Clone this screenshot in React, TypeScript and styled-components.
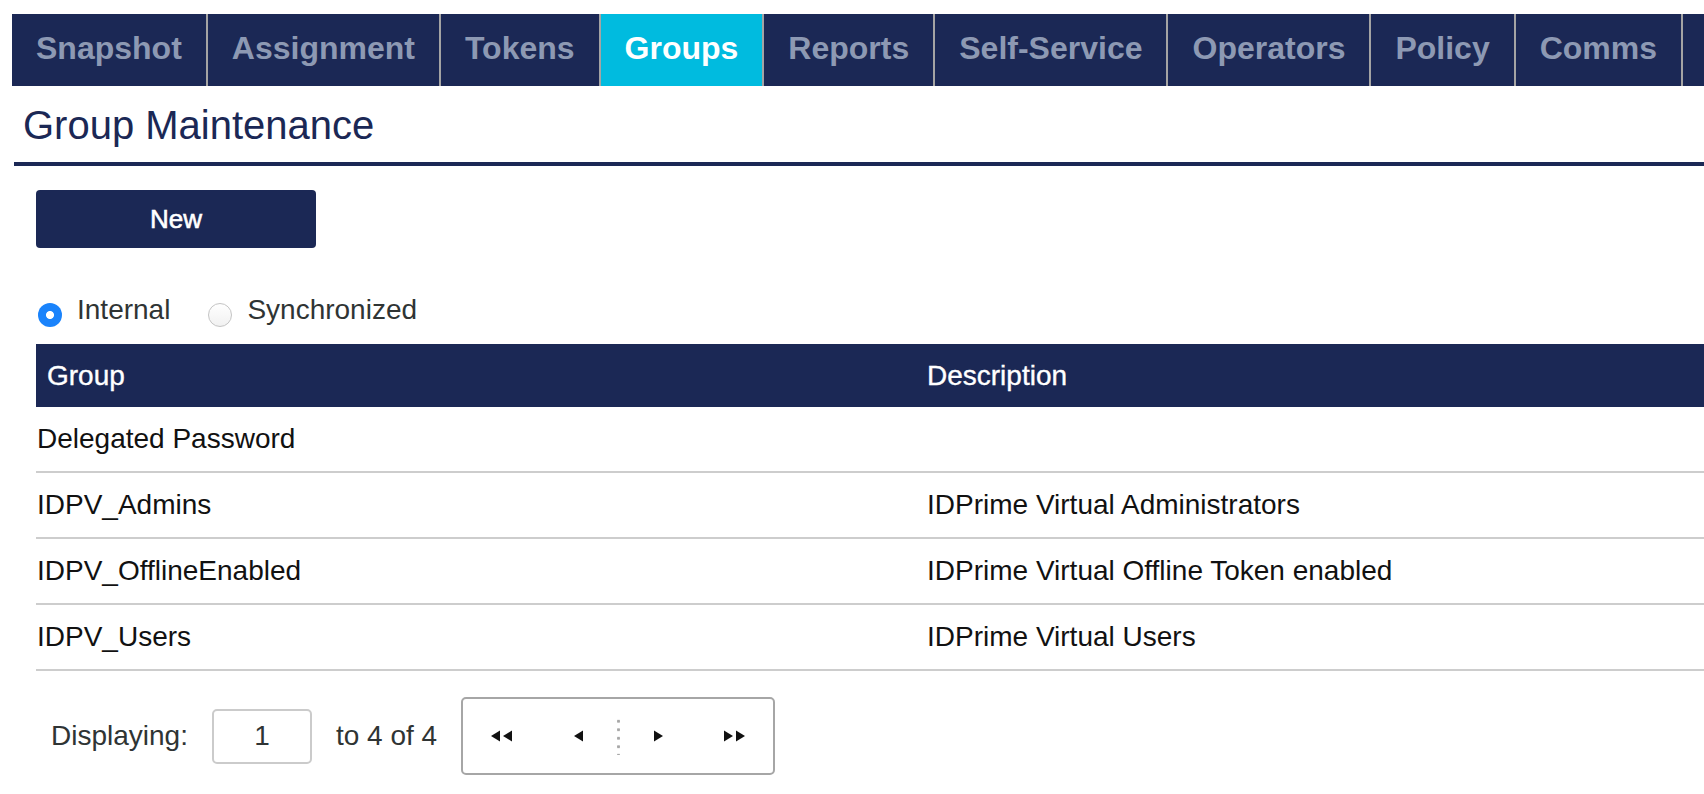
import React from "react";
import styled, { createGlobalStyle } from "styled-components";

const NAVY = "#1b2855";

const GlobalStyle = createGlobalStyle`
  html, body { margin: 0; padding: 0; background: #fff; overflow: hidden; }
  body { font-family: "Liberation Sans", Arial, Helvetica, sans-serif; }
  * { box-sizing: border-box; }
`;

const Page = styled.div`
  width: 100%;
  padding: 14px 0 0 12px;
  overflow: hidden;
`;

const NavBar = styled.nav`
  display: flex;
  height: 72px;
  background: ${NAVY};
  overflow: hidden;
  white-space: nowrap;
`;

const Tab = styled.div<{ $active?: boolean }>`
  flex-shrink: 0;
  display: flex;
  align-items: center;
  padding: 0 24px 4px;
  font-size: 32px;
  font-weight: 700;
  color: ${(p) => (p.$active ? "#ffffff" : "#8d99b3")};
  background: ${(p) => (p.$active ? "#00bbdf" : NAVY)};
  border-right: 2px solid #a4a4a4;
`;

const TitleBar = styled.header`
  margin-left: 2px;
  padding: 16px 0 14px 9px;
  border-bottom: 4px solid ${NAVY};
`;

const Title = styled.h1`
  margin: 0;
  font-size: 40px;
  line-height: 46px;
  font-weight: 400;
  color: ${NAVY};
`;

const Content = styled.main`
  padding-left: 24px;
`;

const NewButton = styled.button`
  display: block;
  margin-top: 24px;
  width: 280px;
  height: 58px;
  border: none;
  border-radius: 4px;
  background: ${NAVY};
  color: #fff;
  font-family: inherit;
  font-size: 26px;
  font-weight: 400;
  -webkit-text-stroke: 0.6px #fff;
`;

const RadioRow = styled.div`
  display: flex;
  gap: 38px;
  margin-top: 45px;
  padding-left: 2px;
`;

const RadioLabel = styled.label`
  display: flex;
  align-items: flex-start;
  gap: 15px;
  font-size: 28px;
  line-height: 34px;
  color: #2f3434;
`;

const RadioDot = styled.span<{ $checked?: boolean }>`
  margin-top: 10px;
  width: 24px;
  height: 24px;
  border-radius: 50%;
  flex-shrink: 0;
  ${(p) =>
    p.$checked
      ? `background: radial-gradient(circle, #ffffff 0 3.6px, #1a83fb 4.4px);`
      : `background: linear-gradient(#ffffff, #f1f1f1); border: 1px solid #c4c4c4;`}
`;

const Grid = styled.div`
  display: grid;
  grid-template-columns: 880px 1fr;
  margin-top: 17px;
`;

const HeadCell = styled.div`
  height: 63px;
  display: flex;
  align-items: center;
  padding-left: 11px;
  background: ${NAVY};
  color: #fff;
  font-size: 28px;
  -webkit-text-stroke: 0.35px #fff;
  white-space: nowrap;
`;

const Cell = styled.div<{ $pad: number }>`
  height: 66px;
  display: flex;
  align-items: center;
  padding-left: ${(p) => p.$pad}px;
  border-bottom: 2px solid #cdcdcd;
  font-size: 28px;
  color: #111;
  white-space: nowrap;
`;

const Footer = styled.div`
  display: flex;
  align-items: center;
  gap: 24px;
  margin-top: 26px;
  padding-left: 15px;
  font-size: 28px;
  color: #2f3434;
`;

const PageInput = styled.div`
  width: 100px;
  height: 55px;
  display: flex;
  align-items: center;
  justify-content: center;
  border: 2px solid #cbcbcb;
  border-radius: 5px;
`;

const Pager = styled.div`
  display: flex;
  align-items: center;
  width: 314px;
  height: 78px;
  border: 2px solid #a6a6a6;
  border-radius: 5px;
`;

const PagerButton = styled.span`
  width: 78px;
  height: 100%;
  display: flex;
  align-items: center;
  justify-content: center;
`;

const DotDivider = styled.span`
  width: 3px;
  height: 38px;
  background: radial-gradient(circle, #a8a8a8 1.3px, transparent 1.7px) center top / 3px 8.5px repeat-y;
`;

const Tri = ({ dir, double }: { dir: "l" | "r"; double?: boolean }) => {
  const w = double ? 21 : 9;
  const one = (x: number) =>
    dir === "l" ? `${x},6 ${x + 9},0.5 ${x + 9},11.5` : `${x},0.5 ${x + 9},6 ${x},11.5`;
  return (
    <svg width={w} height={12} viewBox={`0 0 ${w} 12`}>
      <polygon points={one(0)} fill="#111" />
      {double && <polygon points={one(12)} fill="#111" />}
    </svg>
  );
};

const tabs = ["Snapshot", "Assignment", "Tokens", "Groups", "Reports", "Self-Service", "Operators", "Policy", "Comms"];

const rows: [string, string][] = [
  ["Delegated Password", ""],
  ["IDPV_Admins", "IDPrime Virtual Administrators"],
  ["IDPV_OfflineEnabled", "IDPrime Virtual Offline Token enabled"],
  ["IDPV_Users", "IDPrime Virtual Users"],
];

export default function App() {
  return (
    <>
      <GlobalStyle />
      <Page>
        <NavBar>
          {tabs.map((t) => (
            <Tab key={t} $active={t === "Groups"}>
              {t}
            </Tab>
          ))}
        </NavBar>
        <TitleBar>
          <Title>Group Maintenance</Title>
        </TitleBar>
        <Content>
          <NewButton>New</NewButton>
          <RadioRow>
            <RadioLabel>
              <RadioDot $checked />
              Internal
            </RadioLabel>
            <RadioLabel>
              <RadioDot />
              Synchronized
            </RadioLabel>
          </RadioRow>
          <Grid>
            <HeadCell>Group</HeadCell>
            <HeadCell>Description</HeadCell>
            {rows.map(([g, d]) => (
              <React.Fragment key={g}>
                <Cell $pad={1}>{g}</Cell>
                <Cell $pad={11}>{d}</Cell>
              </React.Fragment>
            ))}
          </Grid>
          <Footer>
            <span>Displaying:</span>
            <PageInput>1</PageInput>
            <span>to 4 of 4</span>
            <Pager>
              <PagerButton>
                <Tri dir="l" double />
              </PagerButton>
              <PagerButton>
                <Tri dir="l" />
              </PagerButton>
              <DotDivider />
              <PagerButton>
                <Tri dir="r" />
              </PagerButton>
              <PagerButton>
                <Tri dir="r" double />
              </PagerButton>
            </Pager>
          </Footer>
        </Content>
      </Page>
    </>
  );
}
